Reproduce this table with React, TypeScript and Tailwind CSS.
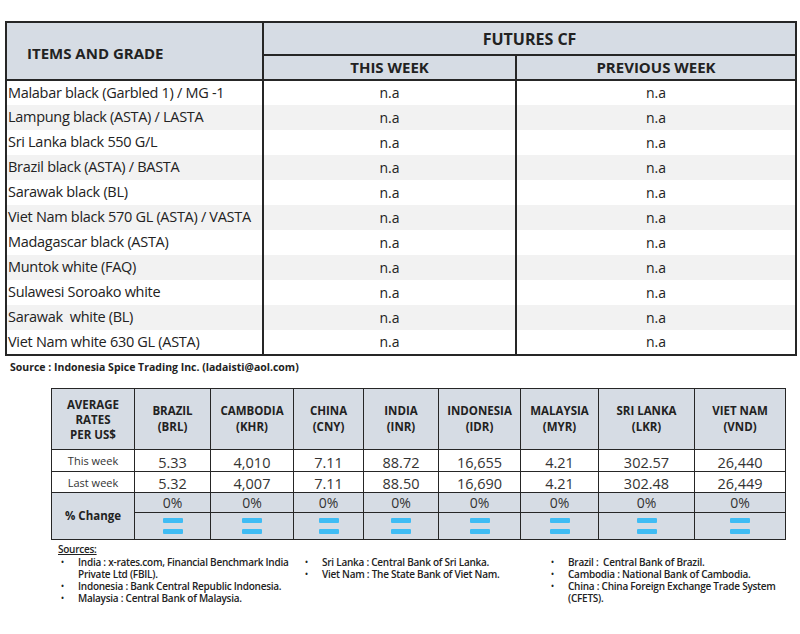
const items = [
  "Malabar black (Garbled 1) / MG -1",
  "Lampung black (ASTA) / LASTA",
  "Sri Lanka black 550 G/L",
  "Brazil black (ASTA) / BASTA",
  "Sarawak black (BL)",
  "Viet Nam black 570 GL (ASTA) / VASTA",
  "Madagascar black (ASTA)",
  "Muntok white (FAQ)",
  "Sulawesi Soroako white",
  "Sarawak\u00a0 white (BL)",
  "Viet Nam white 630 GL (ASTA)",
];

const currencies = [
  { name: "BRAZIL", code: "(BRL)", now: "5.33", last: "5.32", w: "w-[76px]" },
  { name: "CAMBODIA", code: "(KHR)", now: "4,010", last: "4,007", w: "w-[83px]" },
  { name: "CHINA", code: "(CNY)", now: "7.11", last: "7.11", w: "w-[70px]" },
  { name: "INDIA", code: "(INR)", now: "88.72", last: "88.50", w: "w-[75px]" },
  { name: "INDONESIA", code: "(IDR)", now: "16,655", last: "16,690", w: "w-[82px]" },
  { name: "MALAYSIA", code: "(MYR)", now: "4.21", last: "4.21", w: "w-[78px]" },
  { name: "SRI LANKA", code: "(LKR)", now: "302.57", last: "302.48", w: "w-[96px]" },
  { name: "VIET NAM", code: "(VND)", now: "26,440", last: "26,449", w: "w-[91px]" },
];

const font = { fontFamily: '"Open Sans", "Noto Sans", sans-serif' };

function Equal() {
  return (
    <div className="flex flex-col items-center gap-[6px]">
      <div className="h-[5px] w-[20px] rounded-[1px] bg-[#3fbcf4]" />
      <div className="h-[5px] w-[20px] rounded-[1px] bg-[#3fbcf4]" />
    </div>
  );
}

function Bullet({ children }: { children: React.ReactNode }) {
  return (
    <li className="flex">
      <span className="w-[20px] shrink-0 pl-[3px] text-[8px] leading-[12px]">•</span>
      <span>{children}</span>
    </li>
  );
}

export default function App() {
  return (
    <div className="h-[634px] w-[800px] bg-white text-[#222]" style={font}>
      {/* Futures table */}
      <div className="pl-[5px] pt-[21px]">
        <table className="w-[790px] table-fixed border-collapse border-2 border-[#262626]">
          <colgroup>
            <col className="w-[257px]" />
            <col className="w-[253px]" />
            <col className="w-[280px]" />
          </colgroup>
          <thead>
            <tr className="h-[33px] bg-[#d6dce4]">
              <th
                rowSpan={2}
                className="border-2 border-[#262626] pl-[20px] pt-[4px] text-left text-[15px] font-bold"
              >
                ITEMS AND GRADE
              </th>
              <th colSpan={2} className="border-2 border-[#262626] text-[16px] font-bold">
                FUTURES CF
              </th>
            </tr>
            <tr className="h-[25px] bg-[#d6dce4]">
              <th className="border-2 border-[#262626] text-[15px] font-bold leading-none">THIS WEEK</th>
              <th className="border-2 border-[#262626] text-[15px] font-bold leading-none">PREVIOUS WEEK</th>
            </tr>
          </thead>
          <tbody>
            {items.map((item, i) => (
              <tr key={item} className={`h-[25px] ${i % 2 ? "bg-[#f2f2f2]" : "bg-white"}`}>
                <td className="whitespace-nowrap border-x-2 border-[#262626] pl-[1px] text-[14.5px] leading-none tracking-[-0.3px]">
                  {item}
                </td>
                <td className="border-x-2 border-[#262626] text-center text-[14px] leading-none">n.a</td>
                <td className="border-x-2 border-[#262626] text-center text-[14px] leading-none">n.a</td>
              </tr>
            ))}
          </tbody>
        </table>
      </div>

      <p className="pl-[10px] pt-[4px] text-[10.5px] font-bold leading-[14px]">
        Source : Indonesia Spice Trading Inc. (ladaisti@aol.com)
      </p>

      {/* Exchange rate table */}
      <div className="pl-[51px] pt-[14px]">
        <table className="w-[734px] table-fixed border-collapse border-[1.5px] border-[#262626] text-center">
          <colgroup>
            <col className="w-[83px]" />
            {currencies.map((c) => (
              <col key={c.name} className={c.w} />
            ))}
          </colgroup>
          <tbody>
            <tr className="h-[61px] bg-[#d6dce4]">
              <td className="border-[1.5px] border-[#262626] text-[11.5px] font-bold leading-[15px]">
                AVERAGE
                <br />
                RATES
                <br />
                PER US$
              </td>
              {currencies.map((c) => (
                <td key={c.name} className="border-[1.5px] border-[#262626] text-[11.5px] font-bold leading-[16px]">
                  {c.name}
                  <br />
                  {c.code}
                </td>
              ))}
            </tr>
            <tr className="h-[22px] bg-white">
              <td className="border-[1.5px] border-[#262626] text-[11px] leading-none text-[#333]">This week</td>
              {currencies.map((c) => (
                <td key={c.name} className="border-[1.5px] border-[#262626] pt-[3px] align-bottom text-[14.5px] leading-[17px] text-[#333]">
                  {c.now}
                </td>
              ))}
            </tr>
            <tr className="h-[21px] bg-white">
              <td className="border-[1.5px] border-[#262626] text-[11px] leading-none text-[#333]">Last week</td>
              {currencies.map((c) => (
                <td key={c.name} className="border-[1.5px] border-[#262626] pt-[3px] align-bottom text-[14.5px] leading-[17px] text-[#333]">
                  {c.last}
                </td>
              ))}
            </tr>
            <tr className="h-[20px] bg-[#d6dce4]">
              <td rowSpan={2} className="border-[1.5px] border-[#262626] text-[11.5px] font-bold">
                % Change
              </td>
              {currencies.map((c) => (
                <td key={c.name} className="border-[1.5px] border-[#262626] align-bottom text-[14px] leading-[18px] text-[#333]">
                  0%
                </td>
              ))}
            </tr>
            <tr className="h-[27px] bg-[#d6dce4]">
              {currencies.map((c) => (
                <td key={c.name} className="border-[1.5px] border-[#262626]">
                  <Equal />
                </td>
              ))}
            </tr>
          </tbody>
        </table>
      </div>

      {/* Sources */}
      <div className="pl-[58px] pt-[3px] text-[10px] font-semibold leading-[12px] tracking-[-0.25px] text-[#222]">
        <p className="underline">Sources:</p>
        <div className="flex pt-[1px]">
          <ul className="w-[244px] shrink-0">
            <Bullet>India : x-rates.com, Financial Benchmark India Private Ltd (FBIL).</Bullet>
            <Bullet>Indonesia : Bank Central Republic Indonesia.</Bullet>
            <Bullet>Malaysia : Central Bank of Malaysia.</Bullet>
          </ul>
          <ul className="w-[246px] shrink-0">
            <Bullet>Sri Lanka : Central Bank of Sri Lanka.</Bullet>
            <Bullet>Viet Nam : The State Bank of Viet Nam.</Bullet>
          </ul>
          <ul className="w-[240px] shrink-0">
            <Bullet>Brazil :&nbsp; Central Bank of Brazil.</Bullet>
            <Bullet>Cambodia : National Bank of Cambodia.</Bullet>
            <Bullet>China : China Foreign Exchange Trade System (CFETS).</Bullet>
          </ul>
        </div>
      </div>
    </div>
  );
}
